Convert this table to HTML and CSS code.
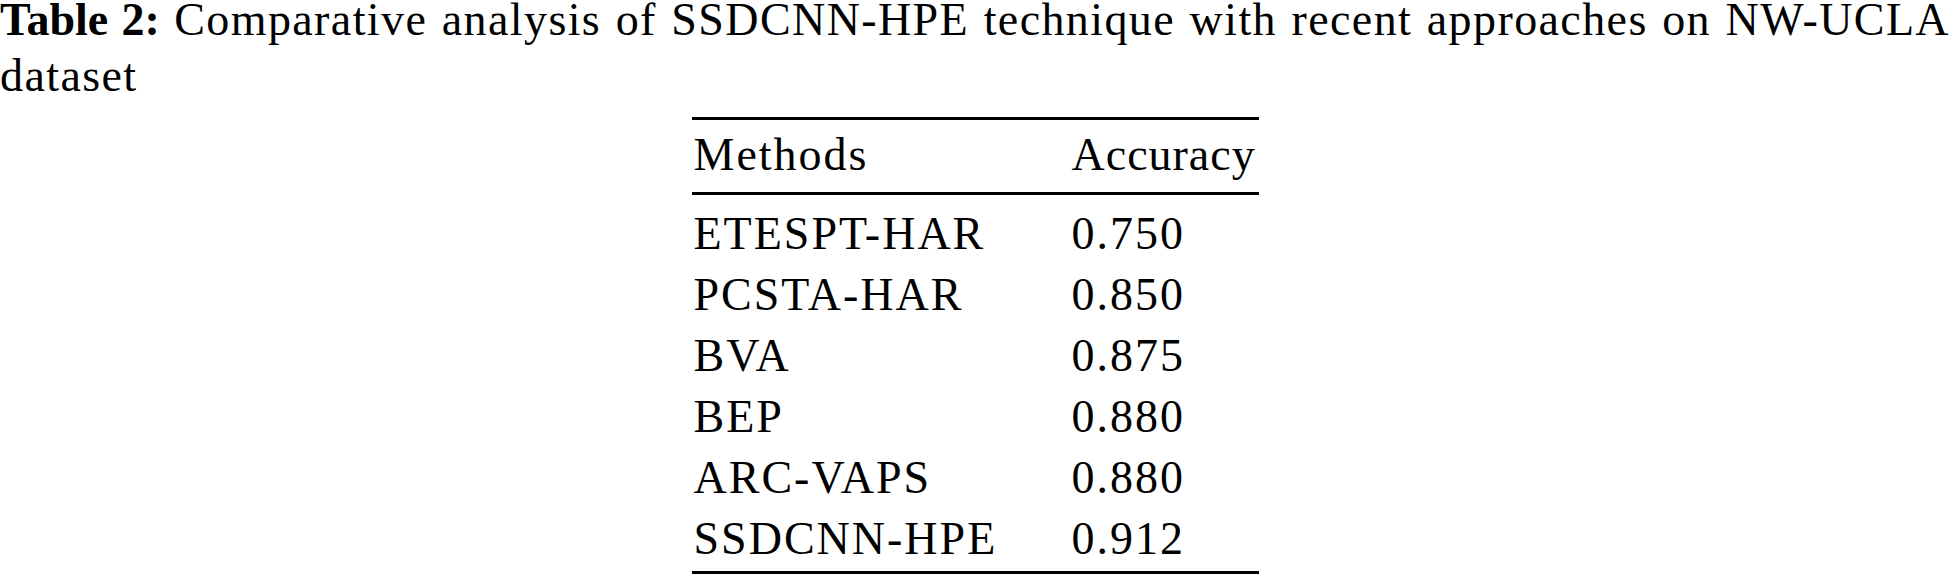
FILE: index.html
```html
<!DOCTYPE html>
<html lang="en">
<head>
<meta charset="utf-8">
<title>Table 2</title>
<link rel="stylesheet" href="styles.css">
</head>
<body>
<div class="page">
  <p class="caption"><span class="label">Table 2:</span> Comparative analysis of SSDCNN-HPE technique with recent approaches on NW-UCLA dataset</p>
  <table class="results">
    <thead>
      <tr><th class="col-method">Methods</th><th class="col-acc head-acc">Accuracy</th></tr>
    </thead>
    <tbody>
      <tr><td class="col-method">ETESPT-HAR</td><td class="col-acc">0.750</td></tr>
      <tr><td class="col-method">PCSTA-HAR</td><td class="col-acc">0.850</td></tr>
      <tr><td class="col-method">BVA</td><td class="col-acc">0.875</td></tr>
      <tr><td class="col-method">BEP</td><td class="col-acc">0.880</td></tr>
      <tr><td class="col-method">ARC-VAPS</td><td class="col-acc">0.880</td></tr>
      <tr><td class="col-method">SSDCNN-HPE</td><td class="col-acc">0.912</td></tr>
    </tbody>
  </table>
</div>
</body>
</html>
```

FILE: styles.css
```css
html, body {
  margin: 0;
  padding: 0;
  background: #ffffff;
}

.page {
  width: 1950px;
  font-family: "Liberation Serif", "Times New Roman", serif;
  color: #000000;
}

.caption {
  margin: -8px 0 0 0;
  font-size: 46px;
  line-height: 56px;
  letter-spacing: 1.4px;
  text-align: justify;
}

.label {
  font-weight: bold;
  letter-spacing: 0;
}

.results {
  margin: 13px auto 0 auto;
  width: 567px;
  table-layout: fixed;
  border-collapse: collapse;
  border-top: 3px solid #000;
  border-bottom: 3px solid #000;
  font-size: 46px;
  line-height: 61px;
  letter-spacing: 2px;
}

.results th,
.results td {
  padding: 0;
  font-weight: normal;
  text-align: left;
  vertical-align: baseline;
  white-space: nowrap;
}

.results thead th {
  padding-top: 4px;
  padding-bottom: 7px;
  border-bottom: 3px solid #000;
}

.results .head-acc {
  letter-spacing: 1px;
}

.results tbody tr:first-child td {
  padding-top: 8px;
}

.results tbody tr:last-child td {
  padding-bottom: 2px;
}

.col-method {
  width: 378px;
  padding-left: 2px !important;
}

.col-acc {
  width: 187px;
}
```
